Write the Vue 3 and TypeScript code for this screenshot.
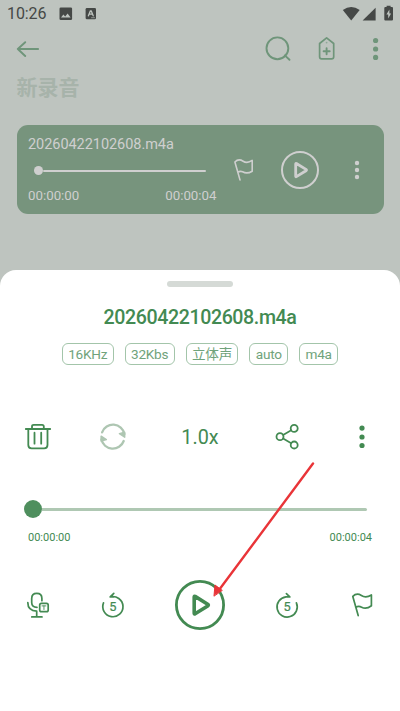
<script setup lang="ts">
const fileName: string = '20260422102608.m4a'
const position: string = '00:00:00'
const duration: string = '00:00:04'
const tags: string[] = ['16KHz', '32Kbs', '立体声', 'auto', 'm4a']
</script>

<template>
  <main class="screen">
    <header class="status">
      <span class="clock">10:26</span>
      <svg class="picture" width="14" height="14" viewBox="0 0 14 14">
        <rect x="0.5" y="0.5" width="12.6" height="12.6" rx="1.3" fill="#454846" />
        <path d="M2 10.6 4.4 7.6 6.2 9.4 8.6 6.5 11.6 10.6Z" fill="#bec4bf" />
      </svg>
      <svg class="letter" width="12" height="14" viewBox="0 0 12 14">
        <rect x="0.6" y="1" width="10.4" height="11.3" rx="1.3" fill="#454846" />
        <path class="glyph" d="M3.4 8.8 5.4 3.8H6.2L8.2 8.8M4.2 7.2H7.4" />
        <path class="glyph thin" d="M6.5 10.7H9.5" />
      </svg>
      <svg class="signals" width="52" height="18" viewBox="0 0 52 18">
        <path d="M.8 4.9Q9.2-.9 17.7 4.9L9.2 15.4Z" />
        <path d="M33.6 2.8V15.6H20.6Z" />
        <path d="M44.6 2V.8H48.6V2H50Q51 2 51 3V14.6Q51 15.6 50 15.6H43.3Q42.3 15.6 42.3 14.6V3Q42.3 2 43.3 2Z" />
        <path class="bolt" d="M47.4 4.6 44.4 9.6H46.2V13.6L49.1 8.4H47.4Z" />
      </svg>
    </header>

    <nav class="toolbar">
      <svg class="back" width="24" height="24" viewBox="0 0 24 24">
        <path d="M10.2 5.2 2.8 12 10.2 19M2.8 12H23.2" />
      </svg>
      <svg class="search" width="26" height="26" viewBox="0 0 26 26">
        <circle cx="12.4" cy="12.3" r="10.9" /><path d="M19.8 19.4 24.5 23.8" />
      </svg>
      <svg class="tag" width="20" height="26" viewBox="0 0 20 26">
        <path d="M2.6 7.5 9.6 1.9 16.7 7.5V20.7Q16.7 22.8 14.6 22.8H4.6Q2.6 22.8 2.6 20.7Z" />
        <path d="M9.6 12.3V18.3M6.6 15.3H12.7" stroke-width="1.9" />
        <circle cx="9.6" cy="6.6" r=".9" stroke="none" fill="#8fa998" />
      </svg>
      <svg class="more" width="8" height="26" viewBox="0 0 8 26">
        <circle cx="3.6" cy="4.5" r="2.6" /><circle cx="3.6" cy="13" r="2.6" /><circle cx="3.6" cy="21.4" r="2.6" />
      </svg>
    </nav>
    <h1 class="heading">新录音</h1>

    <article class="card">
      <div class="track">
        <div class="card-name">{{ fileName }}</div>
        <div class="card-slider"><i></i></div>
        <div class="card-times"><span>{{ position }}</span><span>{{ duration }}</span></div>
      </div>
      <svg class="card-flag" width="24" height="24" viewBox="0 0 24 24">
        <path d="M8 21.9 2.9 4Q6.5.3 11.1 3.2 15.2 5.8 20.2 2.4V13.2Q15 16.3 10.6 13.8 8.2 12.8 5.8 14.2" />
      </svg>
      <svg class="card-play" width="40" height="40" viewBox="0 0 40 40">
        <circle cx="20" cy="20" r="18" />
        <path d="M15.7 13.9V26.3Q15.7 27 16.4 26.6L26 20.8Q27 20.1 26 19.4L16.4 13.5Q15.7 13.2 15.7 13.9Z" stroke-width="2.8" />
      </svg>
      <svg class="card-more" width="8" height="24" viewBox="0 0 8 24">
        <circle cx="4" cy="5" r="2.2" /><circle cx="4" cy="12" r="2.2" /><circle cx="4" cy="19" r="2.2" />
      </svg>
    </article>

    <section class="sheet">
      <div class="handle"></div>
      <h2 class="name">{{ fileName }}</h2>
      <div class="tags"><span v-for="tag in tags" :key="tag">{{ tag }}</span></div>

      <div class="actions">
        <svg width="28" height="28" viewBox="0 0 28 28">
          <path d="M1.8 6H26.2M4.3 6V22Q4.3 25.3 7.6 25.3H20.2Q23.5 25.3 23.5 22V6M8 6V3.5Q8 1.8 9.7 1.8H18.1Q19.8 1.8 19.8 3.5V6M10.5 9.7V20.7M17.2 9.7V20.7" stroke-width="1.8" />
        </svg>
        <svg class="faded" width="28" height="28" viewBox="0 0 28 28">
          <path d="M3.1 9.3A11.6 11.6 0 0 1 25.4 11M24.7 18A11.6 11.6 0 0 1 2.4 16.3" stroke-width="2.3" />
          <path class="head" d="M25.7 14.2 20.4 10.7 25.7 9.2ZM2.1 13.1 7.4 16.6 2.1 18.1Z" />
        </svg>
        <span class="speed">1.0x</span>
        <svg width="28" height="28" viewBox="0 0 28 28">
          <circle cx="7" cy="13.7" r="3.5" /><circle cx="21.2" cy="5.4" r="3.5" /><circle cx="21.2" cy="22" r="3.5" />
          <path d="M10.1 11.9 18.2 7.2M10.1 15.5 18.2 20.2" stroke-width="1.7" />
        </svg>
        <svg class="solid" width="8" height="28" viewBox="0 0 8 28">
          <circle cx="4" cy="5.1" r="2.6" /><circle cx="4" cy="14" r="2.6" /><circle cx="4" cy="22.5" r="2.6" />
        </svg>
      </div>

      <div class="slider"><i></i></div>
      <div class="times"><span>{{ position }}</span><span>{{ duration }}</span></div>

      <div class="controls">
        <svg width="28" height="28" viewBox="0 0 28 28">
          <path d="M13 16.3Q7.7 16.3 7.7 11.5V7.5Q7.7 2.4 12.8 2.4 17.9 2.4 17.9 7.5V9.7M3.8 11.5Q3.8 19.8 12.7 20.1M12.7 20.1V25.9M7.8 25.9H18" stroke-width="1.7" />
          <rect x="15.7" y="12.3" width="8.5" height="8.3" rx="1.7" stroke-width="1.7" />
          <path d="M18 14.9H21.9M19.95 14.9V18.5" stroke-width=".9" />
        </svg>
        <svg width="28" height="28" viewBox="0 0 28 28">
          <path d="M4.5 11.9A10.1 10.1 0 1 0 11.2 5.9H14.6M11.2 5.9 14.8 2.4" stroke-width="1.7" />
          <text x="13.8" y="19.7">5</text>
        </svg>
        <svg class="play" width="52" height="52" viewBox="0 0 52 52">
          <circle cx="26" cy="26" r="23.6" stroke-width="2.8" />
          <path d="M20.2 18V34.3Q20.2 35.4 21.1 34.8L33.7 27Q35 26.1 33.7 25.2L21.1 17.4Q20.2 17 20.2 18Z" stroke-width="3.6" />
        </svg>
        <svg width="28" height="28" viewBox="0 0 28 28">
          <path d="M23.4 11.9A10.1 10.1 0 1 1 13 5.9H16.8M16.8 5.9 13.4 2.6" stroke-width="1.7" />
          <text x="14" y="19.7">5</text>
        </svg>
        <svg width="28" height="28" viewBox="0 0 28 28">
          <path d="M10.2 24.6 4.8 5.4Q8.6 1.5 13.4 4.5 17.8 7.4 23.4 4V14.8Q18.2 18.7 13.6 16.2 10.8 14.6 7.7 16.2" stroke-width="1.7" />
        </svg>
      </div>
    </section>

    <svg class="pointer" width="110" height="146" viewBox="0 0 110 146">
      <path d="M103 6.5 9 133" stroke="#e93438" stroke-width="2.4" stroke-linecap="round" />
      <path class="tip" d="M4 138.8 5 128 12 133.2Z" />
    </svg>
  </main>
</template>

<style>
body { margin: 0; }
</style>

<style scoped>
.screen {
  position: relative;
  display: flex;
  flex-direction: column;
  width: 400px;
  height: 711px;
  overflow: hidden;
  background: #bec4bf;
  font-family: Roboto, "Noto Sans CJK SC", sans-serif;
}
svg {
  display: block;
  flex: none;
  fill: none;
  stroke: currentColor;
  stroke-linecap: round;
  stroke-linejoin: round;
}
.status {
  display: flex;
  align-items: center;
  height: 28px;
  padding: 0 6px 0 7px;
  box-sizing: border-box;
  color: #454846;
}
.status svg { stroke: none; }
.status .glyph { stroke: #bec4bf; stroke-width: 1.3; }
.status .thin { stroke-width: 0.6; }
.clock { width: 52px; font-size: 16px; letter-spacing: -0.1px; line-height: 28px; }
.letter { margin-left: 12px; }
.status .signals { margin-left: auto; fill: currentColor; }
.signals .bolt { fill: #bec4bf; }
.toolbar {
  display: flex;
  align-items: center;
  height: 42px;
  padding: 0 20px 0 15px;
  color: #6f957a;
  stroke-width: 1.9;
}
.search { margin-left: 226px; }
.tag { margin-left: 26px; stroke-width: 1.7; }
.more { margin-left: auto; fill: currentColor; stroke: none; }
.heading {
  margin: 0;
  padding-left: 16.5px;
  height: 55px;
  font-size: 21px;
  font-weight: 700;
  line-height: 37px;
  color: #a7b3aa;
}
.card {
  display: grid;
  grid-template-columns: 201px 52px 61px 53px;
  align-items: center;
  justify-items: center;
  width: 367px;
  height: 89px;
  margin: 0 auto;
  border-radius: 11px;
  background: #77947d;
  color: #cfcfcf;
}
.track {
  box-sizing: border-box;
  width: 201px;
  height: 89px;
  padding: 10px 1px 0 11.5px;
}
.card-name { font-size: 14.5px; letter-spacing: -0.05px; line-height: 20px; }
.card-slider { display: flex; align-items: center; height: 31px; padding: 0 11px 0 6px; }
.card-slider i { width: 9px; height: 9px; border-radius: 50%; background: #cfcfcf; }
.card-slider::after { content: ""; flex: 1; height: 2px; border-radius: 1px; background: #cfcfcf; }
.card-times { display: flex; justify-content: space-between; font-size: 13.3px; line-height: 19px; }
.card-flag { stroke-width: 1.6; }
.card-play { stroke-width: 2; }
.card-more, .solid { fill: currentColor; stroke: none; }
.sheet {
  flex: 1;
  display: flex;
  flex-direction: column;
  margin-top: 56px;
  border-radius: 16px 16px 0 0;
  background: #fff;
  color: #438a52;
}
.handle {
  width: 66px;
  height: 6px;
  margin: 11px auto 0;
  border-radius: 3px;
  background: #d5dad6;
}
.name {
  margin: 18px 0 0;
  text-align: center;
  font-size: 19.6px;
  font-weight: 500;
  letter-spacing: -0.4px;
  line-height: 26px;
}
.tags { display: flex; justify-content: center; gap: 11px; height: 22px; margin-top: 12px; }
.tags span {
  box-sizing: border-box;
  padding: 0 5.4px;
  border: 1px solid #a3c5aa;
  border-radius: 6px;
  font-size: 13.6px;
  letter-spacing: -0.25px;
  line-height: 20px;
  color: #70a37b;
}
.actions, .controls {
  display: grid;
  grid-template-columns: 76px 74px 100px 74px 76px;
  align-items: center;
  justify-items: center;
}
.actions { height: 28px; margin-top: 58px; stroke-width: 1.8; }
.faded { color: #aec6b2; }
.faded .head { fill: currentColor; stroke-width: 1.4; }
.speed { padding-top: 2px; font-size: 19.8px; line-height: 26px; }
.slider { display: flex; align-items: center; height: 18px; margin-top: 49px; padding: 0 33px 0 24px; }
.slider i { width: 18px; height: 18px; border-radius: 50%; background: #4f8f5e; }
.slider::after { content: ""; flex: 1; height: 3px; border-radius: 0 2px 2px 0; background: #afc8b3; }
.times {
  display: flex;
  justify-content: space-between;
  margin-top: 13px;
  padding: 0 28px;
  font-size: 11px;
  line-height: 14px;
}
.controls { height: 52px; margin-top: 34px; }
.controls text {
  fill: currentColor;
  stroke: currentColor;
  stroke-width: 0.2px;
  font-size: 12.8px;
  text-anchor: middle;
}
.pointer { position: absolute; left: 210px; top: 457px; }
.pointer .tip { fill: #e93438; stroke: #e93438; stroke-width: 1; }
</style>
